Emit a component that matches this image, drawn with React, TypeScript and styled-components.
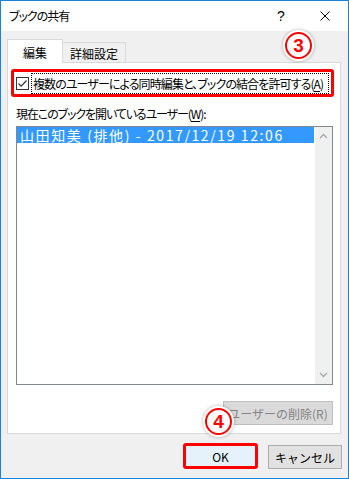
import React from "react";
import styled, { createGlobalStyle } from "styled-components";

const Global = createGlobalStyle`
  html, body { margin: 0; padding: 0; background: #ffffff; }
  body {
    font-family: "Noto Sans CJK JP", "Noto Sans", sans-serif;
    font-size: 12px;
    color: #000;
  }
  * { box-sizing: border-box; }
`;

const Window = styled.div`
  position: relative;
  width: 349px;
  height: 479px;
  border: 1px solid #1883d7;
  display: flex;
  flex-direction: column;
  background: #f0f0f0;
  overflow: hidden;
`;

const TitleBar = styled.div`
  height: 30px;
  background: #ffffff;
  display: flex;
  align-items: center;
  padding-left: 8px;
  font-feature-settings: "palt";
`;

const Title = styled.div`
  flex: 1;
  font-size: 12px;
  line-height: 16px;
  letter-spacing: -1px;
`;

const TitleButton = styled.div<{ $w: number; $gap?: number }>`
  width: ${(p) => p.$w}px;
  margin-right: ${(p) => p.$gap ?? 0}px;
  height: 30px;
  display: flex;
  align-items: center;
  justify-content: center;
  font-family: "Liberation Sans", sans-serif;
  font-size: 14px;
`;

const Body = styled.div`
  flex: 1;
  display: flex;
  flex-direction: column;
  padding: 8px 6px 9px 6px;
`;

const TabRow = styled.div`
  height: 23px;
  display: flex;
  align-items: flex-end;
`;

const Tab = styled.div<{ $active?: boolean; $w: number }>`
  position: relative;
  z-index: 1;
  width: ${(p) => p.$w}px;
  height: ${(p) => (p.$active ? 24 : 20)}px;
  margin-bottom: ${(p) => (p.$active ? -1 : 0)}px;
  background: ${(p) => (p.$active ? "#ffffff" : "#f0f0f0")};
  border: 1px solid #d9d9d9;
  border-bottom: none;
  border-left: ${(p) => (p.$active ? "1px solid #d9d9d9" : "none")};
  display: flex;
  align-items: center;
  justify-content: center;
  padding-top: ${(p) => (p.$active ? 2 : 1)}px;
  font-size: 12px;
`;

const Panel = styled.div`
  height: 372px;
  margin-right: 1px;
  background: #ffffff;
  border: 1px solid #d9d9d9;
  display: flex;
  flex-direction: column;
  padding: 6px 0 0 3px;
`;

const Highlight = styled.div`
  border: 3px solid #ff0000;
  border-radius: 3px;
`;

const CheckHighlight = styled(Highlight)`
  width: 323px;
  height: 28px;
  display: flex;
  align-items: center;
  padding-left: 2px;
`;

const CheckBox = styled.div`
  width: 13px;
  height: 13px;
  border: 1px solid #333333;
  background: #ffffff;
  display: flex;
  align-items: center;
  justify-content: center;
`;

const FocusLabel = styled.div`
  margin-left: 2px;
  height: 21px;
  width: 298px;
  border: 1px dotted #000;
  display: flex;
  align-items: center;
  padding-left: 1px;
  font-size: 12px;
  letter-spacing: -0.9px;
  white-space: nowrap;
  font-feature-settings: "palt";
`;

const Mnemonic = styled.span`
  text-decoration: underline;
  text-underline-offset: 2px;
`;

const SectionLabel = styled.div`
  margin: 9px 0 0 5px;
  line-height: 16px;
  font-size: 12px;
  letter-spacing: -1.1px;
  font-feature-settings: "palt";
`;

const ListBox = styled.div`
  margin: 4px 0 0 5px;
  width: 317px;
  height: 259px;
  border: 1px solid #828790;
  display: flex;
`;

const Rows = styled.div`
  flex: 1;
  padding-right: 1px;
`;

const Row = styled.div<{ $selected?: boolean }>`
  height: 16px;
  line-height: 16px;
  padding-left: 3px;
  background: ${(p) => (p.$selected ? "#3399ff" : "transparent")};
  color: ${(p) => (p.$selected ? "#ffffff" : "#000")};
  font-size: 14px;
  letter-spacing: 1.6px;
  white-space: nowrap;
`;

const ScrollBar = styled.div`
  width: 17px;
  background: #f0f0f0;
  display: flex;
  flex-direction: column;
  justify-content: space-between;
  align-items: center;
  padding: 6px 0 6px;
`;

const PanelFooter = styled.div`
  margin-top: 16px;
  display: flex;
  justify-content: flex-end;
  padding-right: 7px;
`;

const Button = styled.div<{ $w: number; $disabled?: boolean; $default?: boolean }>`
  width: ${(p) => p.$w}px;
  height: ${(p) => (p.$default ? 20 : 24)}px;
  display: flex;
  align-items: center;
  justify-content: center;
  font-size: 12px;
  background: ${(p) => (p.$disabled ? "#dadada" : p.$default ? "#e5f1fb" : "#e1e1e1")};
  border: ${(p) => (p.$default ? "none" : p.$disabled ? "1px solid #bfbfbf" : "1px solid #adadad")};
  color: ${(p) => (p.$disabled ? "#838383" : "#000")};
`;

const ButtonRow = styled.div`
  margin-top: 9px;
  display: flex;
  justify-content: flex-end;
  align-items: flex-end;
  gap: 10px;
`;

const OkHighlight = styled(Highlight)`
  width: 75px;
  height: 26px;
  background: #e5f1fb;
`;

const Badge = styled.div<{ $x: number; $y: number }>`
  position: absolute;
  left: ${(p) => p.$x}px;
  top: ${(p) => p.$y}px;
  width: 27px;
  height: 27px;
  border-radius: 50%;
  background: #ffffff;
  border: 2px solid #ff0000;
  box-shadow: 0 0 0 2px #ffffff, 0 0 3px 3px rgba(0, 0, 0, 0.18);
  color: #ff0000;
  font-family: "Liberation Sans", sans-serif;
  font-weight: bold;
  font-size: 19px;
  display: flex;
  align-items: center;
  justify-content: center;
  z-index: 5;
`;

const Chevron = ({ up }: { up?: boolean }) => (
  <svg width="9" height="6" viewBox="0 0 9 6">
    <path
      d={up ? "M1 5 L4.5 1.5 L8 5" : "M1 1 L4.5 4.5 L8 1"}
      fill="none"
      stroke="#a6a6a6"
      strokeWidth="1.3"
    />
  </svg>
);

export default function App() {
  return (
    <>
      <Global />
      <Window>
        <TitleBar>
          <Title>ブックの共有</Title>
          <TitleButton $w={30} $gap={6}>?</TitleButton>
          <TitleButton $w={46}>
            <svg width="10" height="10" viewBox="0 0 10 10">
              <path d="M0.5 0.5 L9.5 9.5 M9.5 0.5 L0.5 9.5" stroke="#000" strokeWidth="1" />
            </svg>
          </TitleButton>
        </TitleBar>
        <Body>
          <TabRow>
            <Tab $active $w={56}>編集</Tab>
            <Tab $w={63}>詳細設定</Tab>
          </TabRow>
          <Panel>
            <CheckHighlight>
              <CheckBox>
                <svg width="11" height="11" viewBox="0 0 11 11">
                  <path d="M1.5 5.5 L4.2 8.2 L9.5 2.5" fill="none" stroke="#333" strokeWidth="1.2" />
                </svg>
              </CheckBox>
              <FocusLabel>
                複数のユーザーによる同時編集と、ブックの結合を許可する(<Mnemonic>A</Mnemonic>)
              </FocusLabel>
            </CheckHighlight>
            <SectionLabel>
              現在このブックを開いているユーザー(<Mnemonic>W</Mnemonic>):
            </SectionLabel>
            <ListBox>
              <Rows>
                <Row $selected>山田知美 (排他) - 2017/12/19 12:06</Row>
              </Rows>
              <ScrollBar>
                <Chevron up />
                <Chevron />
              </ScrollBar>
            </ListBox>
            <PanelFooter>
              <Button $w={110} $disabled>ユーザーの削除(R)</Button>
            </PanelFooter>
          </Panel>
          <ButtonRow>
            <OkHighlight>
              <Button $w={69} $default>OK</Button>
            </OkHighlight>
            <Button $w={74}>キャンセル</Button>
          </ButtonRow>
        </Body>
        <Badge $x={284} $y={31}>3</Badge>
        <Badge $x={204} $y={407}>4</Badge>
      </Window>
    </>
  );
}
